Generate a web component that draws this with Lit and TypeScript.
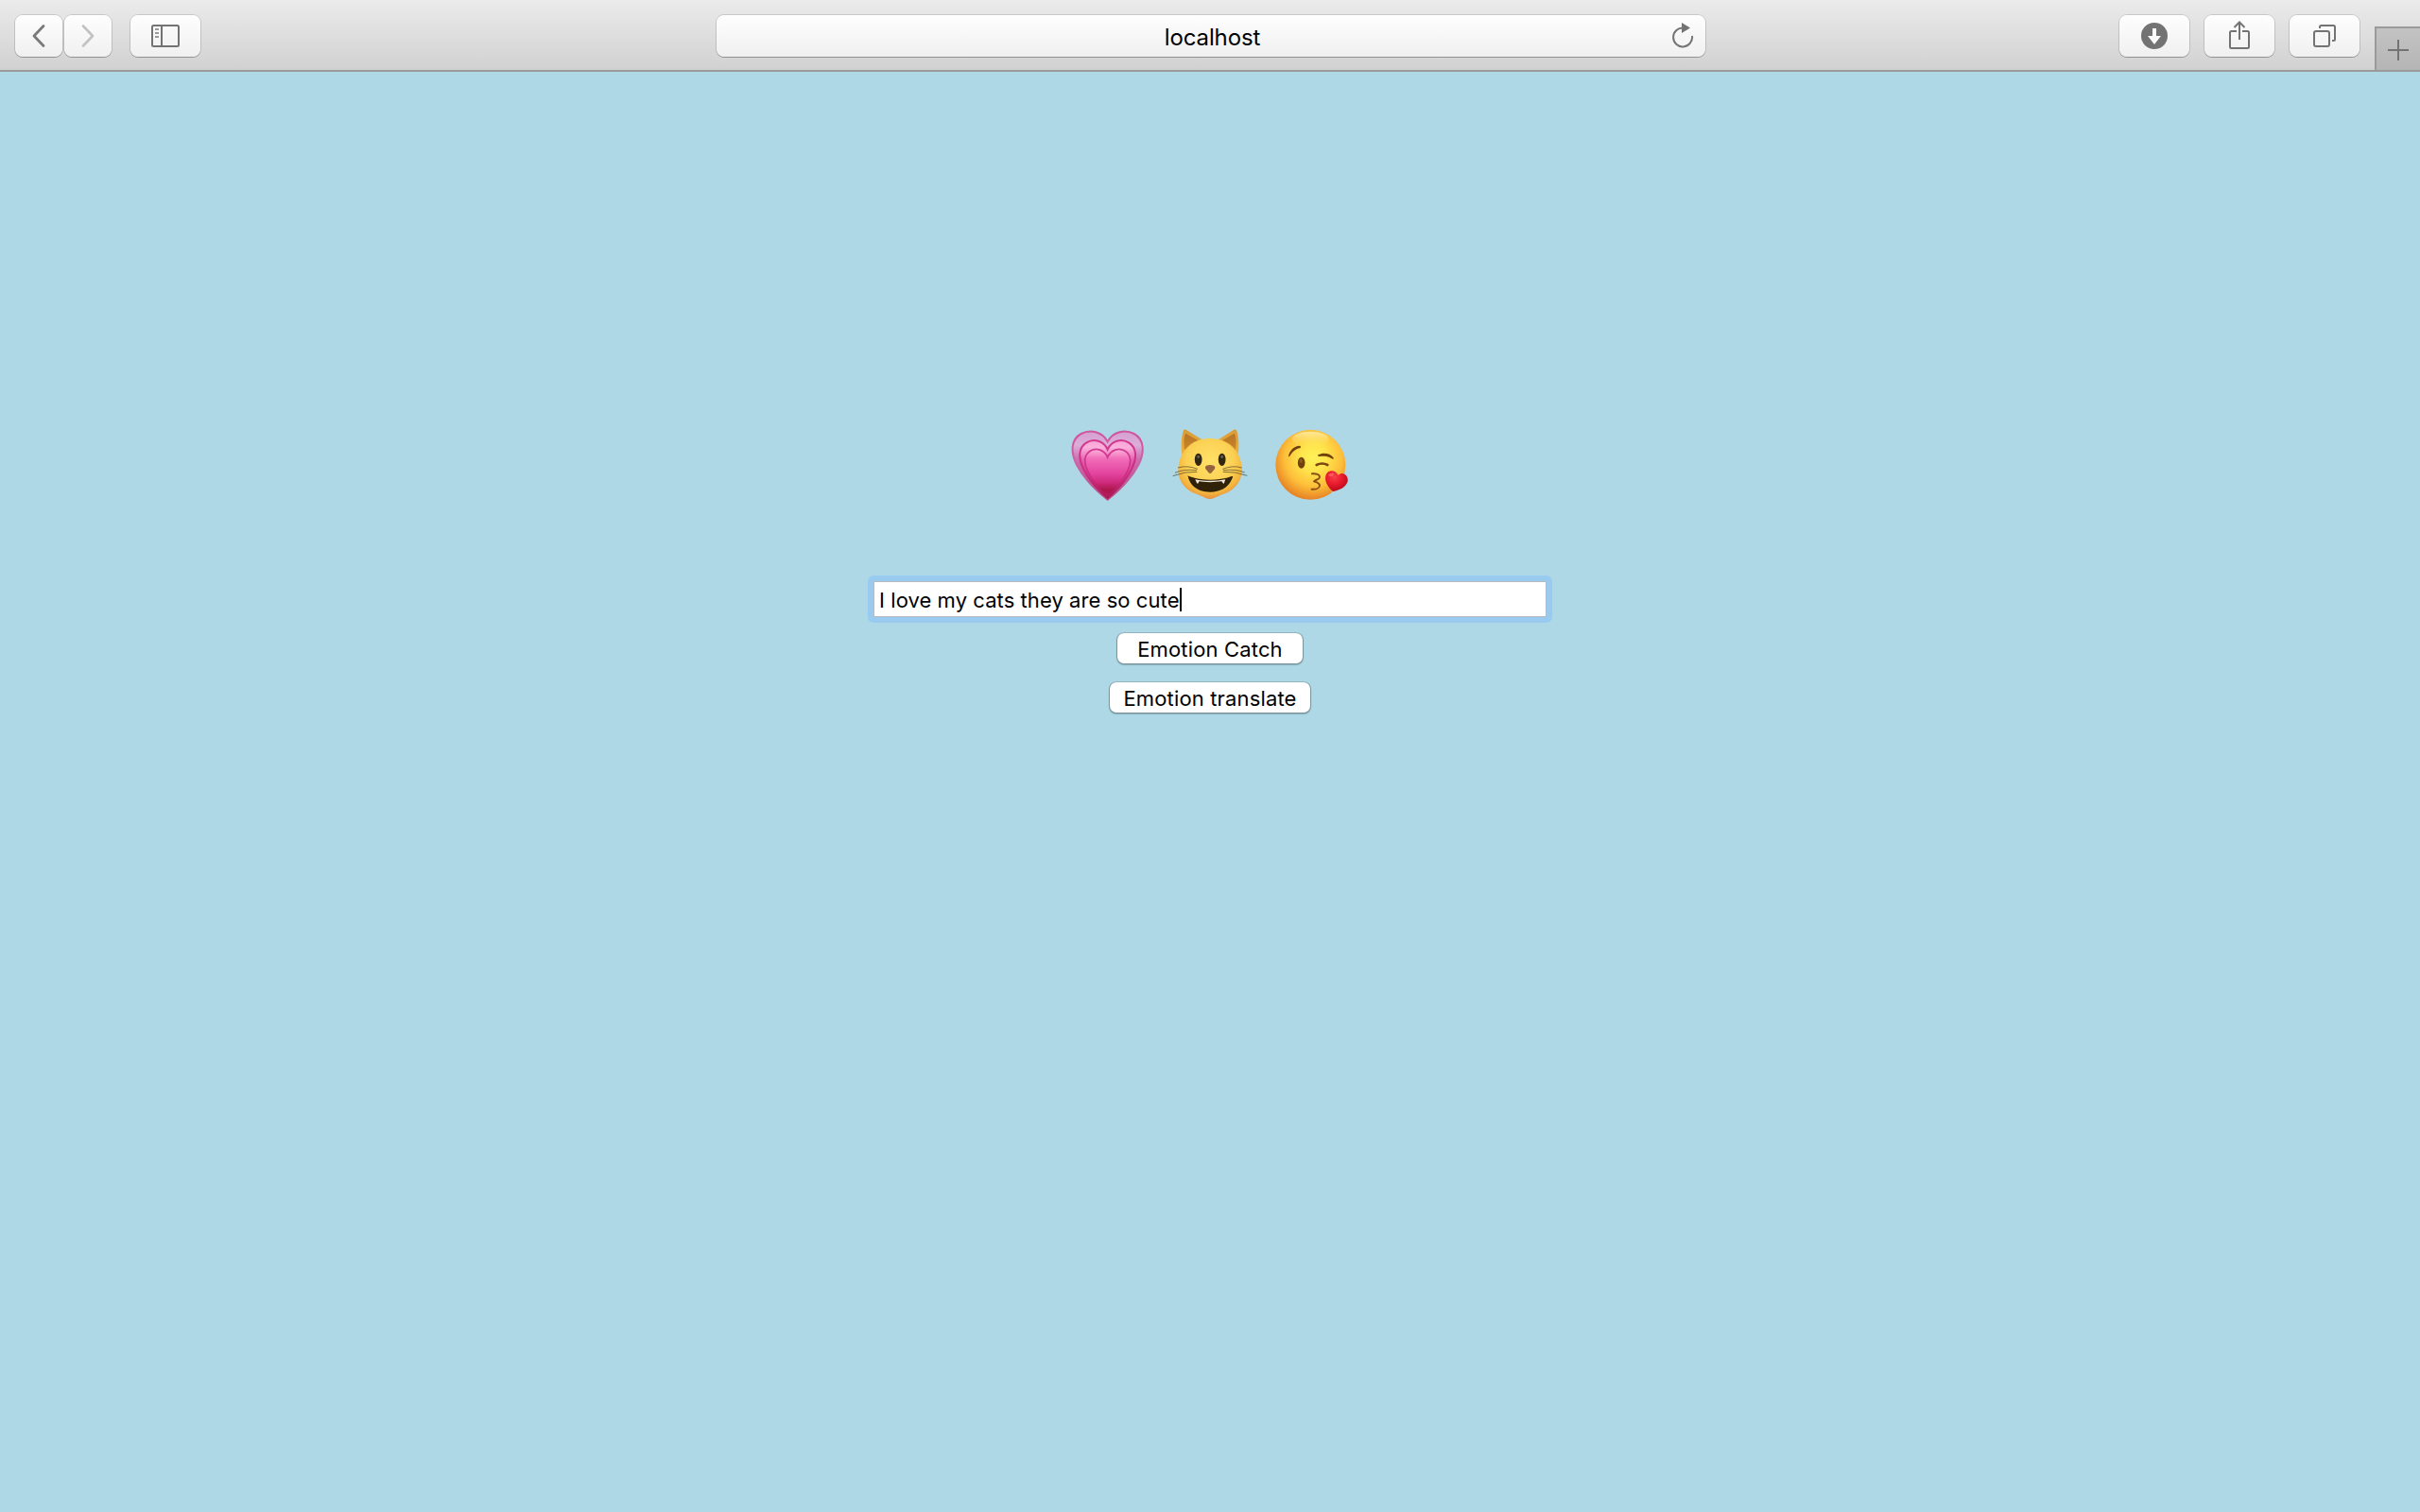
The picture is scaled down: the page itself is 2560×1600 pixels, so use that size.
import { LitElement, html, css } from "lit";
import { customElement } from "lit/decorators.js";

@customElement("browser-toolbar")
class BrowserToolbar extends LitElement {
  static styles = css`
    :host {
      display: flex;
      box-sizing: border-box;
      height: 76px;
      padding-left: 16px;
      border-bottom: 2px solid #9a9a9a;
      background: linear-gradient(#ebebeb, #d1d1d1);
      font-family: Inter, "Liberation Sans", sans-serif;
    }
    .tool,
    .address {
      display: flex;
      align-items: center;
      justify-content: center;
      box-sizing: border-box;
      height: 44px;
      margin: 16px 0 0;
      padding: 0;
      border: 0;
      border-radius: 8px;
      background: linear-gradient(#fefefe, #f0f0f0);
      box-shadow: 0 0 0 1px rgba(0, 0, 0, 0.13), 0 1px 0 0 rgba(0, 0, 0, 0.22);
    }
    .tool {
      width: 74px;
    }
    .nav {
      width: 50px;
    }
    .group {
      display: flex;
    }
    .history {
      gap: 2px;
      margin-right: 20px;
    }
    .address {
      width: 1046px;
      margin-left: 546px;
      padding: 0 10px 0 41px;
      color: #000;
      font-size: 24px;
      line-height: 44px;
    }
    .host {
      flex: 1;
      padding-top: 3px;
      text-align: center;
      letter-spacing: -0.1px;
    }
    .actions {
      gap: 16px;
      margin-left: 438px;
    }
    .new-tab {
      display: flex;
      box-sizing: border-box;
      width: 48px;
      height: 46px;
      margin: 28px 0 0 16px;
      padding: 0;
      border: solid #9a9a9a;
      border-width: 2px 0 0 2px;
      background: linear-gradient(#c3c3c3, #b5b5b5);
    }
    svg {
      display: block;
      fill: none;
      stroke: #737373;
      stroke-width: 2;
    }
  `;

  render() {
    return html`
      <div class="group history">
        <button class="tool nav" aria-label="Back">
          <svg width="50" height="44"><path d="M30 11.5 20 22 30 32.5" stroke-width="2.8" stroke-linecap="round" stroke-linejoin="round" stroke="#7a7a7a"/></svg>
        </button>
        <button class="tool nav" aria-label="Forward">
          <svg width="50" height="44"><path d="M20 11.5 30 22 20 32.5" stroke-width="2.6" stroke-linecap="round" stroke-linejoin="round" stroke="#c2c2c2"/></svg>
        </button>
      </div>
      <button class="tool" aria-label="Sidebar">
        <svg width="74" height="44"><rect x="23" y="11" width="28" height="22" rx="1.5"/><path d="M33 11V33"/><path d="M26 15h4M26 19h4M26 23h4" stroke="#9a9a9a"/></svg>
      </button>
      <div class="address">
        <span class="host">localhost</span>
        <svg width="28" height="44"><path d="M15 13.500A10 10 0 1 0 24 22"/><path d="M13 8v11l9-5.500Z" fill="#737373" stroke="none"/></svg>
      </div>
      <div class="group actions">
        <button class="tool" aria-label="Downloads">
          <svg width="74" height="44"><circle cx="37" cy="22" r="14" fill="#737373" stroke="none"/><path d="M35 14h4v8h5l-7 9-7-9h5Z" fill="#fafafa" stroke="none"/></svg>
        </button>
        <button class="tool" aria-label="Share">
          <svg width="74" height="44"><path d="M34 17H28.500Q27 17 27 18.500V33.500Q27 35 28.500 35H45.500Q47 35 47 33.500V18.500Q47 17 45.500 17H40M37 26V8M31.500 13 37 7.500 42.500 13"/></svg>
        </button>
        <button class="tool" aria-label="Tabs">
          <svg width="74" height="44"><rect x="26" y="17" width="16" height="16" rx="2"/><path d="M32 14V12.500Q32 11 33.500 11H46.500Q48 11 48 12.500V25.500Q48 27 46.500 27H45"/></svg>
        </button>
      </div>
      <button class="new-tab" aria-label="New tab">
        <svg width="46" height="44"><path d="M12 23H34M23 12V34"/></svg>
      </button>
    `;
  }
}

@customElement("emoji-row")
class EmojiRow extends LitElement {
  static styles = css`
    :host {
      display: flex;
      gap: 10px;
    }
    svg {
      display: block;
      width: 100px;
      height: 100px;
    }
  `;

  render() {
    return html`
      <svg viewBox="0 0 300 300" role="img" aria-label="growing heart">
        <defs>
          <linearGradient id="h1" x1="0" y1="0" x2="0" y2="1"><stop offset="0" stop-color="#d49fd0"/><stop offset=".2" stop-color="#dcaed8"/><stop offset=".4" stop-color="#cf70b2"/><stop offset="1" stop-color="#bb3478"/></linearGradient>
          <linearGradient id="h2" x1="0" y1="0" x2="0" y2="1"><stop offset="0" stop-color="#f8a4d6"/><stop offset=".12" stop-color="#fbb0dc"/><stop offset=".35" stop-color="#e55cae"/><stop offset="1" stop-color="#b82468"/></linearGradient>
          <linearGradient id="h3" x1="0" y1="0" x2="0" y2="1"><stop offset="0" stop-color="#fdb2da"/><stop offset=".2" stop-color="#f06cb8"/><stop offset=".5" stop-color="#e4459f"/><stop offset=".68" stop-color="#d02c80"/><stop offset=".85" stop-color="#ad174e"/><stop offset="1" stop-color="#b52060"/></linearGradient>
          <linearGradient id="h4" x1="0" y1="0" x2="0" y2="1"><stop offset="0" stop-color="#d0559f"/><stop offset=".5" stop-color="#c766a8"/><stop offset="1" stop-color="#b84e88"/></linearGradient>
          <linearGradient id="h5" x1="0" y1="0" x2="0" y2="1"><stop offset="0" stop-color="#d23a90"/><stop offset=".6" stop-color="#c92c80"/><stop offset="1" stop-color="#ad1b55"/></linearGradient>
        </defs>
        <path d="M155 82C138 49 99 42 71 57 38 75 37 116 57 156 80 200 122 240 155 266 188 240 230 200 253 156 273 116 272 75 239 57 211 42 172 49 155 82Z" fill="url(#h1)" stroke="url(#h4)" stroke-width="6"/>
        <path d="M155 107C143 80 112 70 88 85 62 101 62 135 77 165 95 203 126 237 155 261 184 237 215 203 233 165 248 135 248 101 222 85 198 70 167 80 155 107Z" fill="url(#h2)" stroke="url(#h5)" stroke-width="6"/>
        <path d="M155 132C145 108 119 100 101 111 79 124 79 150 92 176 107 207 130 237 155 258 180 237 203 207 218 176 231 150 231 124 209 111 191 100 165 108 155 132Z" fill="url(#h3)" stroke="url(#h5)" stroke-width="5"/>
      </svg>
      <svg viewBox="0 0 300 300" role="img" aria-label="grinning cat">
        <defs>
          <radialGradient id="c1" cx=".5" cy=".38" r=".62"><stop offset="0" stop-color="#ffe168"/><stop offset=".6" stop-color="#fbd154"/><stop offset=".85" stop-color="#f3b43d"/><stop offset="1" stop-color="#e58f40"/></radialGradient>
          <linearGradient id="c2" x1="0" y1="0" x2="0" y2="1"><stop offset="0" stop-color="#d89c38"/><stop offset="1" stop-color="#efb23c"/></linearGradient>
          <linearGradient id="c3" x1="0" y1="0" x2="0" y2="1"><stop offset="0" stop-color="#b87425"/><stop offset="1" stop-color="#c9872b"/></linearGradient>
        </defs>
        <path d="M61 122C57 92 60 63 66 46 69 42 74 44 79 47L127 77 67 128ZM239 122C243 92 241 63 234 46 231 42 226 44 221 47L174 77 233 128Z" fill="url(#c2)"/>
        <path d="M69 107C66 84 67 66 73 56L113 79 73 108ZM231 107C234 84 233 66 227 56L188 79 227 108Z" fill="url(#c3)"/>
        <path d="M150 72C99 72 63 101 52 149 41 194 63 231 103 247 126 255 137 264 150 264 163 264 174 255 197 247 237 231 260 194 249 149 238 101 202 72 150 72Z" fill="url(#c1)"/>
        <ellipse cx="113" cy="139" rx="11.500" ry="20" fill="#302611"/>
        <ellipse cx="188" cy="139" rx="11.500" ry="20" fill="#302611"/>
        <ellipse cx="113" cy="130" rx="4" ry="5" fill="#6b6151"/>
        <ellipse cx="188" cy="130" rx="4" ry="5" fill="#6b6151"/>
        <path d="M135 163C137 154 163 154 166 163 167 170 159 175 155 181 152 184 149 184 146 181 142 175 134 170 135 163Z" fill="#94643f"/>
        <path d="M80 192C78 190 80 190 83 192 124 207 177 207 219 192 222 191 223 192 222 195 211 226 185 242 151 242 116 242 88 226 80 192Z" fill="#302209"/>
        <path d="M103 202Q151 211 199 202L197 207Q195 215 193 216L187 208Q151 213 116 208L111 216Q108 214 105 206Z" fill="#f0e8dc"/>
        <path d="M111 169Q77 156 48 165M108 173Q67 168 39 181M109 178Q71 176 32 191M190 169Q223 156 251 165M192 173Q232 168 260 180M191 178Q230 176 268 190" fill="none" stroke="#4b4022" stroke-width="2"/>
      </svg>
      <svg viewBox="0 0 300 300" role="img" aria-label="face blowing a kiss">
        <defs>
          <radialGradient id="k1" cx=".54" cy=".4" r=".62"><stop offset="0" stop-color="#fff158"/><stop offset=".3" stop-color="#ffe54c"/><stop offset=".66" stop-color="#fdbf3a"/><stop offset="1" stop-color="#e47c22"/></radialGradient>
          <linearGradient id="k2" x1="0" y1="0" x2="0" y2="1"><stop offset="0" stop-color="#fff3c0" stop-opacity=".75"/><stop offset=".7" stop-color="#fff08a" stop-opacity=".15"/><stop offset="1" stop-color="#ffef6a" stop-opacity="0"/></linearGradient>
          <radialGradient id="k3" cx=".4" cy=".3" r=".7"><stop offset="0" stop-color="#f8414a"/><stop offset=".5" stop-color="#e81b2c"/><stop offset="1" stop-color="#b90a1c"/></radialGradient>
        </defs>
        <circle cx="139" cy="155.500" r="111" fill="url(#k1)"/>
        <ellipse cx="139" cy="75" rx="58" ry="25" fill="url(#k2)"/>
        <path d="M69 128C73 110 86 95 105 95 109 96 109 101 105 103 91 105 82 114 74 127 71 131 68 130 69 128ZM163 124C177 116 201 117 211 132 214 137 210 139 206 136 194 127 180 128 168 129 163 129 160 126 163 124Z" fill="#70410d"/>
        <ellipse cx="110" cy="149" rx="11.500" ry="18" fill="#70420f"/>
        <ellipse cx="109" cy="143" rx="4" ry="7" fill="#91601d"/>
        <path d="M158 156Q176 147 193 156" fill="none" stroke="#7b4711" stroke-width="8" stroke-linecap="round"/>
        <path d="M144 184C156 182 169 187 168 195 167 202 155 203 150 208 158 211 169 214 168 222 167 231 154 234 143 233" fill="none" stroke="#884e14" stroke-width="6" stroke-linecap="round" stroke-linejoin="round"/>
        <path d="M227 189C221 172 197 170 189 185 180 204 194 228 211 240 229 237 252 228 257 208 260 188 240 175 227 189Z" fill="url(#k3)"/>
        <ellipse cx="205" cy="187" rx="9" ry="5" transform="rotate(-15 205 187)" fill="#ff7478" opacity=".6"/>
      </svg>
    `;
  }
}

@customElement("app-root")
class AppRoot extends LitElement {
  static styles = css`
    :host {
      display: flex;
      flex-direction: column;
      box-sizing: border-box;
      height: 1600px;
      overflow: hidden;
      background: #aed8e5;
      color: #000;
      font-family: Inter, "Liberation Sans", sans-serif;
    }
    .page {
      display: flex;
      flex-direction: column;
      align-items: center;
      padding-top: 364px;
    }
    .ring {
      margin-top: 69px;
      padding: 6px;
      border-radius: 6px;
      background: #99cbf0;
    }
    .field {
      display: flex;
      align-items: center;
      box-sizing: border-box;
      width: 712px;
      height: 38px;
      padding-left: 5px;
      border: 1px solid #b9bac0;
      background: #fff;
      font-size: 22px;
      line-height: 34px;
      letter-spacing: 0.07px;
      white-space: pre;
    }
    .value {
      padding-top: 2px;
    }
    .caret {
      width: 2px;
      height: 25px;
      background: #000;
    }
    .button {
      box-sizing: border-box;
      height: 32px;
      margin: 11px 0 0;
      padding: 2px 0 0;
      border: 0;
      border-radius: 7px;
      background: #fff;
      box-shadow: 0 0 0 1px rgba(0, 0, 0, 0.14), 0 1px 1px 1px rgba(0, 0, 0, 0.2);
      color: #000;
      font: 22px/30px Inter, "Liberation Sans", sans-serif;
      letter-spacing: 0.15px;
    }
    .catch {
      width: 196px;
    }
    .translate {
      width: 212px;
      margin-top: 20px;
    }
  `;

  render() {
    return html`
      <browser-toolbar></browser-toolbar>
      <main class="page">
        <emoji-row></emoji-row>
        <div class="ring">
          <div class="field"><span class="value">I love my cats they are so cute</span><span class="caret"></span></div>
        </div>
        <button class="button catch">Emotion Catch</button>
        <button class="button translate">Emotion translate</button>
      </main>
    `;
  }
}
